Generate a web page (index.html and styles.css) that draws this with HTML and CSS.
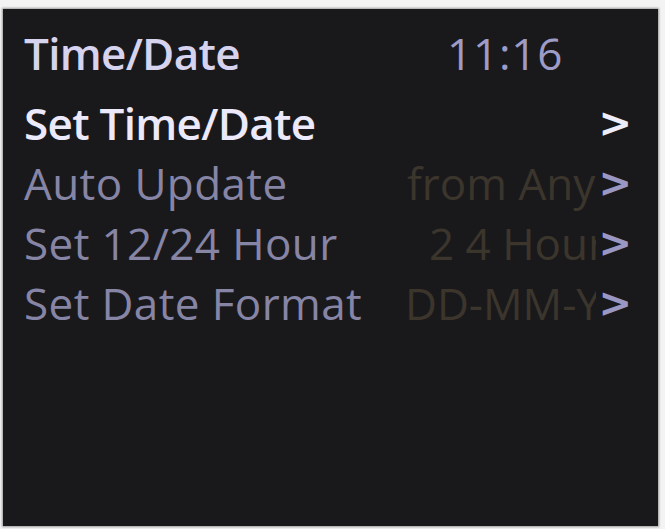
FILE: index.html
```html
<!DOCTYPE html>
<html>
<head>
<meta charset="utf-8">
<link rel="stylesheet" href="styles.css">
</head>
<body>
<div class="screen">
  <div class="row title-row">
    <span class="label title">Time/Date</span>
    <span class="value clock">11:16</span>
    <span class="arrow"></span>
  </div>
  <div class="menu">
    <div class="row selected">
      <span class="label">Set Time/Date</span>
      <span class="value"></span>
      <span class="arrow">&gt;</span>
    </div>
    <div class="row">
      <span class="label">Auto Update</span>
      <span class="value"><span class="v v-any">from Any</span></span>
      <span class="arrow">&gt;</span>
    </div>
    <div class="row">
      <span class="label">Set 12/24 Hour</span>
      <span class="value"><span class="v v-hour">2 4 Hour</span></span>
      <span class="arrow">&gt;</span>
    </div>
    <div class="row">
      <span class="label">Set Date Format</span>
      <span class="value"><span class="v v-date">DD-MM-YYYY</span></span>
      <span class="arrow">&gt;</span>
    </div>
  </div>
</div>
</body>
</html>
```

FILE: styles.css
```css
html, body {
  margin: 0;
  padding: 0;
  background: #f3f3f3;
}
body {
  width: 665px;
  height: 529px;
  overflow: hidden;
  font-family: "Open Sans", "DejaVu Sans", sans-serif;
}
.screen {
  box-sizing: border-box;
  margin: 9px 0 0 3px;
  width: 655px;
  height: 517px;
  background: #19191c;
  box-shadow: 0 0 2px 1px #9a9a9a;
  padding: 14px 26px 0 21px;
}
.menu {
  margin-top: 10px;
}
.row {
  display: grid;
  grid-template-columns: 1fr 193px 36px;
  height: 60px;
  line-height: 60px;
  font-size: 44px;
  white-space: nowrap;
}
.label {
  color: #8785a6;
  letter-spacing: 0.4px;
}
.title {
  color: #d6d3ef;
  font-weight: 600;
  letter-spacing: -0.7px;
}
.clock {
  color: #9e9cc6;
  padding-left: 44px;
  letter-spacing: 0.8px;
}
.value {
  overflow: hidden;
}
.v {
  color: #3b352c;
  display: inline-block;
}
.v-any { margin-left: 4px; }
.v-hour { margin-left: 26px; }
.v-date { margin-left: 2px; }
.arrow {
  font-family: "DejaVu Sans", sans-serif;
  font-weight: bold;
  font-size: 40px;
  color: #9a98c2;
  text-align: right;
}
.selected .label {
  color: #ebe9fa;
  font-weight: 600;
  letter-spacing: -0.7px;
}
.selected .arrow {
  color: #eeeefb;
}
```
